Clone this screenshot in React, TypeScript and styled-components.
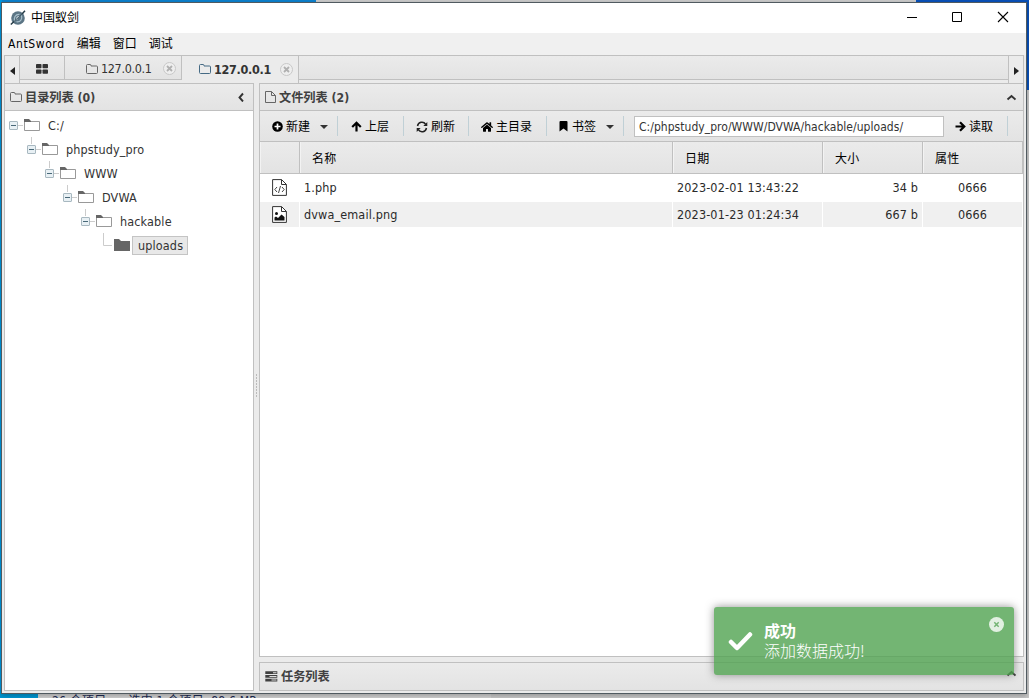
import React from 'react';
import styled, { createGlobalStyle } from 'styled-components';
import { FaHome } from 'react-icons/fa';

const Global = createGlobalStyle`
  * { box-sizing: border-box; }
  html, body { margin: 0; padding: 0; overflow: hidden; }
  body {
    font-family: "DejaVu Sans Condensed", "Noto Sans CJK SC", sans-serif;
    font-size: 12px;
    line-height: 16px;
    color: #333;
  }
  svg { display: block; flex: none; }
`;

const line = '#c0c0c0';

const Desktop = styled.div`
  position: relative;
  width: 1029px;
  height: 698px;
  overflow: hidden;
  background: #c9c9c9;
`;
const Patch = styled.div<{ $x: number; $y: number; $w: number; $h: number; $c: string }>`
  position: absolute;
  left: ${p => p.$x}px;
  top: ${p => p.$y}px;
  width: ${p => p.$w}px;
  height: ${p => p.$h}px;
  background: ${p => p.$c};
`;
const StatusBehind = styled.div`
  position: absolute;
  left: 38px;
  top: 690px;
  width: 453px;
  height: 20px;
  display: flex;
  gap: 22px;
  padding: 3px 0 0 14px;
  background: #d2d2d2;
  color: #1c2c54;
  white-space: pre;
  letter-spacing: 0.22px;
`;
const Window = styled.div`
  position: absolute;
  left: 1px;
  top: 2px;
  width: 1026px;
  height: 692px;
  display: flex;
  flex-direction: column;
  border: 1px solid #505a60;
  background: #ebebeb;
  box-shadow: 0 2px 5px rgba(0, 0, 0, 0.25);
`;
const TitleBar = styled.div`
  flex: none;
  height: 30px;
  display: flex;
  align-items: center;
  padding: 0 17px 0 8px;
  background: #fff;
  color: #000;
`;
const Title = styled.span`
  flex: 1;
  margin-left: 5px;
`;
const WindowButtons = styled.div`
  display: flex;
  gap: 33px;
  padding-bottom: 2px;
`;
const MenuBar = styled.div`
  flex: none;
  height: 22px;
  display: flex;
  align-items: center;
  gap: 12px;
  padding: 0 6px;
  background: #f0f0f0;
  color: #000;
`;
const MenuItem = styled.span<{ $spacing?: number }>`
  letter-spacing: ${p => p.$spacing ?? 0}px;
  white-space: nowrap;
`;
const Client = styled.div`
  flex: 1;
  min-height: 0;
  display: flex;
  flex-direction: column;
  padding: 0 2px 2px;
`;
const TabBar = styled.div`
  flex: none;
  height: 28px;
  display: flex;
  border: 1px solid ${line};
  border-bottom: 0;
  background: #ebebeb;
`;
const TabArrow = styled.div<{ $right?: boolean }>`
  width: 15px;
  display: flex;
  align-items: center;
  justify-content: center;
  padding-top: 2px;
  border-${p => (p.$right ? 'left' : 'right')}: 1px solid ${line};
`;
const Tab = styled.div<{ $width: number; $active?: boolean }>`
  width: ${p => p.$width}px;
  height: ${p => (p.$active ? 27 : 24)}px;
  display: flex;
  align-items: center;
  padding: ${p => (p.$active ? '2px 5px 3px 17px' : '2px 5px 0 21px')};
  border-right: 1px solid ${line};
  border-bottom: ${p => (p.$active ? '0' : `1px solid ${line}`)};
  background: ${p => (p.$active ? '#ebebeb' : 'linear-gradient(#ebebeb, #e3e3e3)')};
  font-weight: ${p => (p.$active ? 'bold' : 'normal')};
`;
const HomeTab = styled(Tab)`
  padding: 2px 0 0 16px;
`;
const TabLabel = styled.span<{ $spacing: number }>`
  flex: 1;
  margin-left: 3px;
  padding-top: 1px;
  letter-spacing: ${p => p.$spacing}px;
  white-space: nowrap;
  font-size: 12.5px;
`;
const TabFill = styled.div`
  flex: 1;
  height: 24px;
  border-bottom: 1px solid ${line};
  background: linear-gradient(#ebebeb, #e3e3e3);
`;
const Body = styled.div`
  flex: 1;
  min-height: 0;
  display: flex;
`;
const Sidebar = styled.div`
  width: 250px;
  display: flex;
  flex-direction: column;
  border: 1px solid ${line};
  background: #fff;
`;
const Splitter = styled.div`
  width: 5px;
  padding: 291px 0 0 2px;
`;
const Grip = styled.div`
  width: 1px;
  height: 24px;
  background: repeating-linear-gradient(#bbb 0 2px, #ebebeb 2px 3px);
`;
const Main = styled.div`
  flex: 1;
  min-width: 0;
  display: flex;
  flex-direction: column;
  gap: 5px;
`;
const FilePanel = styled.div`
  flex: 1;
  min-height: 0;
  display: flex;
  flex-direction: column;
  border: 1px solid ${line};
  background: #fff;
`;
const PanelHeader = styled.div<{ $last?: boolean }>`
  flex: none;
  height: 27px;
  display: flex;
  align-items: center;
  padding: 0 7px 0 5px;
  border-bottom: ${p => (p.$last ? '0' : `1px solid ${line}`)};
  background: linear-gradient(#ebebeb, #e3e3e3);
  font-weight: bold;
  color: #404040;
`;
const PanelTitle = styled.span`
  flex: 1;
  margin-left: 3px;
  padding-top: 1px;
  font-size: 12.2px;
  white-space: nowrap;
`;
const TaskPanel = styled.div`
  flex: none;
  height: 29px;
  border: 1px solid ${line};
`;
const TaskChevron = styled.span`
  padding-bottom: 8px;
`;
const Tree = styled.div`
  padding: 2px 0 0 4px;
`;
const TreeRow = styled.div<{ $depth: number }>`
  height: 24px;
  display: flex;
  align-items: center;
  padding-left: ${p => p.$depth * 18}px;
`;
const TreeLabel = styled.span<{ $selected?: boolean }>`
  height: 19px;
  margin: 1px 0 0 1px;
  padding: 1px ${p => (p.$selected ? 4 : 5)}px 0 5px;
  border: 1px solid ${p => (p.$selected ? '#c4c4c4' : 'transparent')};
  background: ${p => (p.$selected ? '#e8e8e8' : 'transparent')};
  font-size: 12.5px;
  letter-spacing: 0.14px;
`;
const Toolbar = styled.div`
  flex: none;
  height: 31px;
  display: flex;
  align-items: center;
  border-bottom: 1px solid ${line};
  background: linear-gradient(#ebebeb, #e3e3e3);
  color: #000;
`;
const Tool = styled.div<{ $width: number; $pad: number }>`
  width: ${p => p.$width}px;
  height: 20px;
  display: flex;
  align-items: center;
  gap: 3px;
  padding: 1px 0 0 ${p => p.$pad}px;
  border-right: 1px solid #c0d0d6;
  white-space: nowrap;
`;
const Caret = styled.i`
  margin: 1px 0 0 7px;
  border: 4px solid transparent;
  border-top-color: #333;
  border-bottom: 0;
`;
const PathInput = styled.div`
  width: 310px;
  height: 21px;
  margin-left: 10px;
  padding: 1px 4px;
  border: 1px solid ${line};
  background: #fff;
  color: #333;
  letter-spacing: 0.04px;
  line-height: 18px;
`;
const Grid = styled.div`
  display: grid;
  grid-template-columns: 40px 373px 150px 100px 100px;
`;
const HeadCell = styled.div`
  height: 32px;
  padding: 9px 0 0 12px;
  border-right: 1px solid ${line};
  border-bottom: 1px solid ${line};
  box-shadow: inset 1px 0 0 #f3f3f3;
  background: linear-gradient(#ebebeb, #e3e3e3);
  color: #000;
  letter-spacing: 0.3px;
`;
const Cell = styled.div<{ $even?: boolean; $align?: 'right' | 'center' }>`
  height: 27px;
  display: flex;
  align-items: center;
  justify-content: ${p => (p.$align === 'right' ? 'flex-end' : p.$align === 'center' ? 'center' : 'flex-start')};
  padding: 0 4px;
  border: 1px solid #fff;
  border-left: 0;
  background: ${p => (p.$even ? '#f0f0f0' : '#fff')};
  font-size: 12.5px;
  letter-spacing: 0.14px;
  color: #2a2a2a;
  white-space: pre;
`;
const Toast = styled.div`
  position: absolute;
  left: 714px;
  top: 607px;
  width: 300px;
  height: 68px;
  display: flex;
  padding: 15px 10px 0 14px;
  border-radius: 3px;
  background: #51a351;
  box-shadow: 0 0 8px #777;
  opacity: 0.8;
  color: #fff;
  font-size: 16px;
`;
const ToastText = styled.div`
  flex: 1;
  display: flex;
  flex-direction: column;
  margin-left: 11px;
  padding-top: 1px;
`;
const ToastTitle = styled.div`
  font-weight: bold;
  line-height: 18px;
`;
const ToastMessage = styled.div`
  font-weight: 300;
  font-family: "Noto Sans CJK SC", sans-serif;
  line-height: 18px;
`;
const ToastClose = styled.div`
  width: 15px;
  height: 15px;
  margin-top: -5px;
`;

const AppIcon = () => (
  <svg width="16" height="16" viewBox="0 0 16 16">
    <circle cx="8" cy="8" r="6.8" fill="#5b7585" />
    <path d="M5 11.500C3 8 5.500 4 9.500 4.300M11.500 5.500c1.200 4-1.500 6.800-5 6.200" fill="none" stroke="#a9c0cc" strokeWidth="1.200" />
    <path d="M9.300 6.500C7.500 6.500 6.500 8 6.800 9.800" fill="none" stroke="#dbe6ec" strokeWidth="1.200" />
    <path d="M.8 14.500 4 11.500M12 4 15 .8" stroke="#263d49" strokeWidth="1.500" />
    <path d="M4 11.500 12 4" stroke="#3c5361" strokeWidth=".9" />
  </svg>
);
const FolderOutline = ({ color = '#666' }: { color?: string }) => (
  <svg width="12" height="12" viewBox="0 0 12 12">
    <path d="M.5 2.500q0-1 1-1h2.500q1 0 1 1v.5h5.500q1 0 1 1v5.500q0 1-1 1h-9q-1 0-1-1z" fill="none" stroke={color} />
  </svg>
);
const FileOutline = () => (
  <svg width="11" height="12" viewBox="0 0 11 12">
    <path d="M.5.5h6l4 4v7H.5zM6.500.5v4h4" fill="none" stroke="#666" />
  </svg>
);
const CloseCircle = () => (
  <svg width="13" height="13" viewBox="0 0 13 13">
    <circle cx="6.500" cy="6.500" r="6" fill="#eee" stroke="#c8c8c8" />
    <path d="m4 4 5 5m0-5-5 5" stroke="#b0b0b0" strokeWidth="1.800" />
  </svg>
);
const TilesIcon = () => (
  <svg width="12" height="10" viewBox="0 0 12 10" fill="#333">
    <rect width="5.500" height="4.300" rx=".8" />
    <rect x="6.500" width="5.500" height="4.300" rx=".8" />
    <rect y="5.500" width="5.500" height="4.300" rx=".8" />
    <rect x="6.500" y="5.500" width="5.500" height="4.300" rx=".8" />
  </svg>
);
const PlusIcon = () => (
  <svg width="11" height="11" viewBox="0 0 11 11">
    <circle cx="5.500" cy="5.500" r="5.300" />
    <path d="M2.500 5.500h6M5.500 2.500v6" stroke="#fff" strokeWidth="1.700" />
  </svg>
);
const ArrowIcon = ({ up }: { up?: boolean }) => (
  <svg width="11" height="11" viewBox="0 0 11 11">
    <path
      d={up ? 'M5.500 10.500V2M1.200 6l4.300-4.300L9.800 6' : 'M.5 5.500H9M5 1.200l4.300 4.300L5 9.800'}
      fill="none"
      stroke="#000"
      strokeWidth="2.200"
    />
  </svg>
);
const Bookmark = () => (
  <svg width="10" height="11" viewBox="0 0 10 11">
    <path d="M1.500 0h6q1 0 1 1v9.500L4.500 7.500.5 10.500V1q0-1 1-1z" />
  </svg>
);
const Refresh = () => (
  <svg width="12" height="12" viewBox="0 0 12 12">
    <path d="M1.500 5A4.500 4.500 0 0 1 9.700 3.300M10.500 7A4.500 4.500 0 0 1 2.300 8.700" fill="none" stroke="#222" strokeWidth="1.500" />
    <path d="M11.300 1V5H7.300zM.7 11V7h4z" fill="#222" />
  </svg>
);
const TasksIcon = () => (
  <svg width="13" height="11" viewBox="0 0 13 11">
    <path d="M.3.3h12v2.700H.3zM.3 4h12v2.700H.3zM.3 7.700h12v2.700H.3z" fill="#404040" />
    <path d="M8 1.200h3.500v1H8zM4.500 4.900h7v1h-7zM6.500 8.600h5v1h-5z" fill="#ddd" />
  </svg>
);
const TreeFolder = ({ solid }: { solid?: boolean }) => (
  <svg width="18" height="14" viewBox="0 0 18 14">
    {solid ? (
      <path d="M1 1h5l2 2h9v10H1z" fill="#666" />
    ) : (
      <>
        <path d="M1.500 3.500h15v9h-15z" fill="#fff" stroke="#999" />
        <path d="M1 4V1h5l2 2v1z" fill="#666" />
      </>
    )}
  </svg>
);
const TreeToggle = ({ leaf, root }: { leaf?: boolean; root?: boolean }) => (
  <svg width="14" height="24" viewBox="0 0 14 24">
    {!root && <path d={leaf ? 'M4.500 0v12.500H13' : 'M4.500 0v7'} fill="none" stroke="#ccc" />}
    {!leaf && (
      <>
        <path d="M9 12.500h5" stroke="#ccc" />
        <rect x=".5" y="8.500" width="8" height="8" rx=".5" fill="#e8f0f4" stroke="#a8b8c0" />
        <path d="M2 12.500h5" stroke="#486878" />
      </>
    )}
  </svg>
);
const Chevron = ({ left }: { left?: boolean }) => (
  <svg width="10" height="10" viewBox="0 0 10 10">
    <path d={left ? 'M7 1.500 3.500 5.500 7 9.500' : 'm1.500 7.500 4-3.500 4 3.500'} fill="none" stroke="#333" strokeWidth="1.900" />
  </svg>
);
const FileIcon = ({ image }: { image?: boolean }) => (
  <svg width="15" height="17" viewBox="0 0 15 17">
    <path d="M.6.600h9l4.800 4.800v11H.6z" fill="#fff" stroke="#333" />
    <path d="M9.500.7v4.800h4.800" fill="none" stroke="#333" />
    {image ? (
      <path d="M2.500 14.500v-3l1.500-1 2 1.500L9.500 8.500l3 2.500v3.500zM3 7.500a1.500 1.500 0 1 0 3 0 1.500 1.500 0 1 0-3 0" fill="#111" />
    ) : (
      <path d="m5 8-2.200 2.500L5 13M10 8l2.200 2.500L10 13M8.500 7l-2 7" fill="none" stroke="#444" />
    )}
  </svg>
);

const tree = ['C:/', 'phpstudy_pro', 'WWW', 'DVWA', 'hackable', 'uploads'];
const files = [
  { name: '1.php', date: '2023-02-01 13:43:22', size: '34 b', mode: '0666', image: false },
  { name: 'dvwa_email.png', date: '2023-01-23 01:24:34', size: '667 b', mode: '0666', image: true },
];

export default function App() {
  return (
    <Desktop>
      <Global />
      <Patch $x={0} $y={0} $w={316} $h={3} $c="#0c80cc" />
      <Patch $x={0} $y={0} $w={2} $h={698} $c="#0098e0" />
      <Patch $x={0} $y={690} $w={38} $h={8} $c="#0098d4" />
      <Patch $x={916} $y={0} $w={113} $h={90} $c="#0850b8" />
      <StatusBehind>
        <span>26 个项目</span>
        <span>选中 1 个项目  88.6 MB</span>
      </StatusBehind>
      <Window>
        <TitleBar>
          <AppIcon />
          <Title>中国蚁剑</Title>
          <WindowButtons>
            <svg width="12" height="12"><path d="M0 6.500h10" stroke="#000" /></svg>
            <svg width="12" height="12"><path d="M.5 1.500h9v9h-9z" fill="none" stroke="#000" /></svg>
            <svg width="12" height="12"><path d="m1 1 10 10m0-10L1 11" stroke="#000" strokeWidth="1.100" /></svg>
          </WindowButtons>
        </TitleBar>
        <MenuBar>
          <MenuItem $spacing={0.6}>AntSword</MenuItem>
          <MenuItem>编辑</MenuItem>
          <MenuItem>窗口</MenuItem>
          <MenuItem>调试</MenuItem>
        </MenuBar>
        <Client>
          <TabBar>
            <TabArrow>
              <svg width="5" height="8"><path d="M5 0v8L0 4z" fill="#222" /></svg>
            </TabArrow>
            <HomeTab $width={45}><TilesIcon /></HomeTab>
            <Tab $width={117}>
              <FolderOutline />
              <TabLabel $spacing={-0.35}>127.0.0.1</TabLabel>
              <CloseCircle />
            </Tab>
            <Tab $width={117} $active>
              <FolderOutline color="#456a84" />
              <TabLabel $spacing={-0.3}>127.0.0.1</TabLabel>
              <CloseCircle />
            </Tab>
            <TabFill />
            <TabArrow $right>
              <svg width="5" height="8"><path d="M0 0v8l5-4z" fill="#222" /></svg>
            </TabArrow>
          </TabBar>
          <Body>
            <Sidebar>
              <PanelHeader>
                <FolderOutline />
                <PanelTitle>目录列表 (0)</PanelTitle>
                <Chevron left />
              </PanelHeader>
              <Tree>
                {tree.map((name, i) => (
                  <TreeRow key={name} $depth={i}>
                    <TreeToggle root={i === 0} leaf={i === 5} />
                    <TreeFolder solid={i === 5} />
                    <TreeLabel $selected={i === 5}>{name}</TreeLabel>
                  </TreeRow>
                ))}
              </Tree>
            </Sidebar>
            <Splitter><Grip /></Splitter>
            <Main>
              <FilePanel>
                <PanelHeader>
                  <FileOutline />
                  <PanelTitle>文件列表 (2)</PanelTitle>
                  <Chevron />
                </PanelHeader>
                <Toolbar>
                  <Tool $width={78} $pad={12}><PlusIcon />新建<Caret /></Tool>
                  <Tool $width={66} $pad={13}><ArrowIcon up />上层</Tool>
                  <Tool $width={65} $pad={12}><Refresh />刷新</Tool>
                  <Tool $width={78} $pad={12}><FaHome size={12} />主目录</Tool>
                  <Tool $width={77} $pad={12}><Bookmark />书签<Caret /></Tool>
                  <PathInput>C:/phpstudy_pro/WWW/DVWA/hackable/uploads/</PathInput>
                  <Tool $width={64} $pad={11}><ArrowIcon />读取</Tool>
                </Toolbar>
                <Grid>
                  <HeadCell />
                  <HeadCell>名称</HeadCell>
                  <HeadCell>日期</HeadCell>
                  <HeadCell>大小</HeadCell>
                  <HeadCell>属性</HeadCell>
                  {files.map((f, i) => (
                    <React.Fragment key={f.name}>
                      <Cell $even={i === 1} $align="center"><FileIcon image={f.image} /></Cell>
                      <Cell $even={i === 1}>{f.name}</Cell>
                      <Cell $even={i === 1}>{f.date}</Cell>
                      <Cell $even={i === 1} $align="right">{f.size}</Cell>
                      <Cell $even={i === 1} $align="center">{f.mode}</Cell>
                    </React.Fragment>
                  ))}
                </Grid>
              </FilePanel>
              <TaskPanel>
                <PanelHeader $last>
                  <TasksIcon />
                  <PanelTitle>任务列表</PanelTitle>
                  <TaskChevron><Chevron /></TaskChevron>
                </PanelHeader>
              </TaskPanel>
            </Main>
          </Body>
        </Client>
      </Window>
      <Toast>
        <svg width="25" height="36" viewBox="0 0 25 36">
          <path d="m3 20 6 6L22 12.500" fill="none" stroke="#fff" strokeWidth="4.500" strokeLinecap="round" strokeLinejoin="round" />
        </svg>
        <ToastText>
          <ToastTitle>成功</ToastTitle>
          <ToastMessage>添加数据成功!</ToastMessage>
        </ToastText>
        <ToastClose>
          <svg width="15" height="15" viewBox="0 0 15 15">
            <circle cx="7.500" cy="7.500" r="7.500" fill="#fff" opacity=".8" />
            <path d="m5.300 5.300 4.400 4.400m0-4.400-4.400 4.400" stroke="#51a351" strokeWidth="1.500" />
          </svg>
        </ToastClose>
      </Toast>
    </Desktop>
  );
}
